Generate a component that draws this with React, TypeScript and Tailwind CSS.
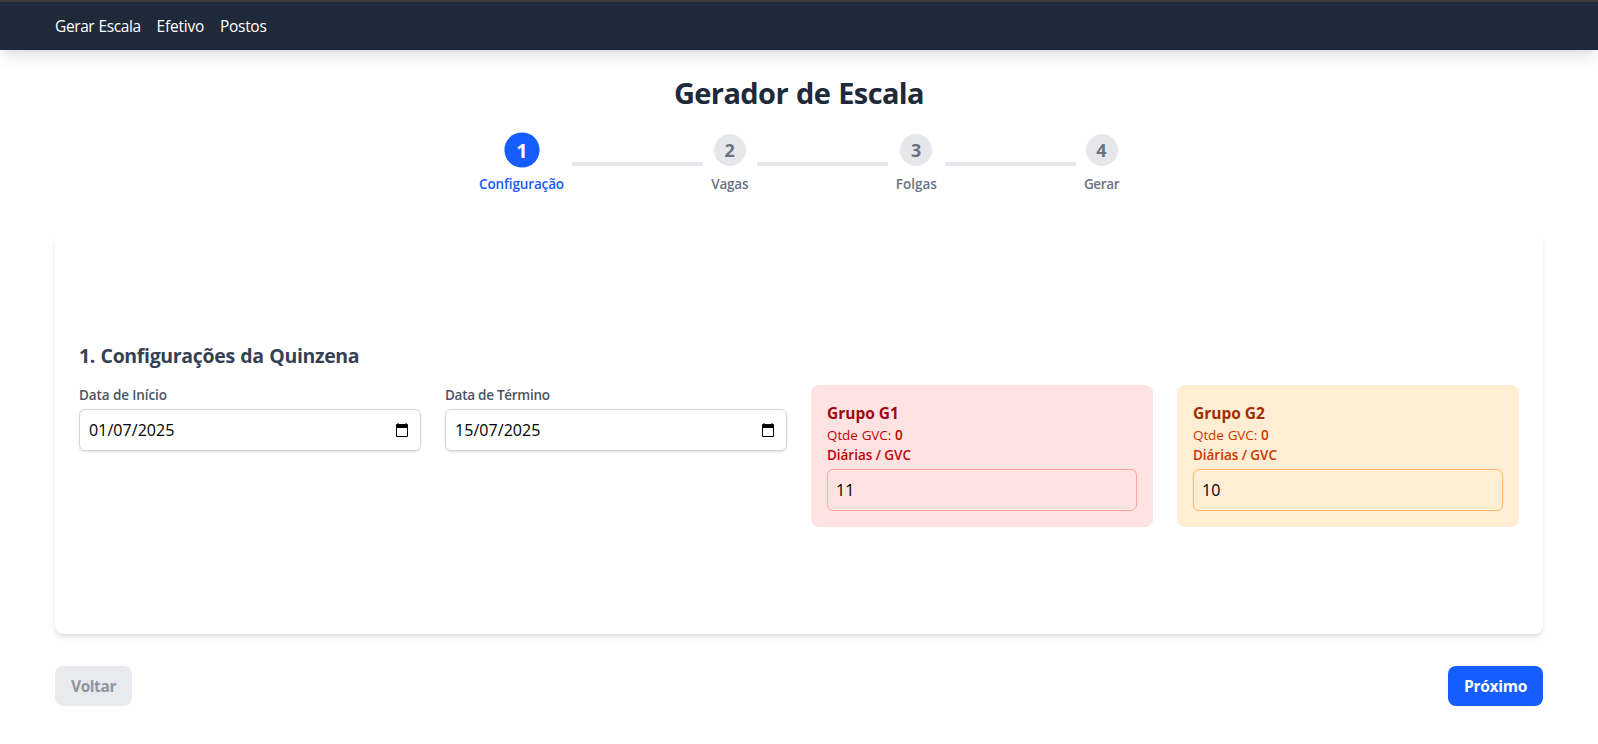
type Step = { n: number; label: string; width: string; tracking: string };

const steps: Step[] = [
  { n: 1, label: 'Configuração', width: 'w-[85px]', tracking: 'tracking-[-0.13px]' },
  { n: 2, label: 'Vagas', width: 'w-[37.5px]', tracking: 'tracking-[-0.2px]' },
  { n: 3, label: 'Folgas', width: 'w-[41.5px]', tracking: 'tracking-[0px]' },
  { n: 4, label: 'Gerar', width: 'w-[35px]', tracking: 'tracking-[-0.38px]' },
];

function Navbar() {
  return (
    <nav className="border-t-2 border-[#3b3b3d] bg-gray-800 text-white shadow-lg">
      <div className="mx-auto flex max-w-[1536px] gap-4 px-6 py-3 text-[15.5px]/6">
        <a className="w-[85.5px] whitespace-nowrap tracking-[-0.39px] [word-spacing:0.5px]">Gerar Escala</a>
        <a className="w-[47.5px] whitespace-nowrap tracking-[-0.2px]">Efetivo</a>
        <a className="w-[47px] whitespace-nowrap tracking-[-0.3px]">Postos</a>
      </div>
    </nav>
  );
}

function Stepper({ current }: { current: number }) {
  return (
    <div className="mx-auto mt-[22px] flex w-[640px] items-center justify-between">
      {steps.map((s, i) => {
        const active = s.n === current;
        return (
          <div key={s.n} className="contents">
            {i > 0 && <div className="mx-2 h-1 flex-1 bg-gray-200" />}
            <div className={`flex shrink-0 flex-col items-center ${s.width}`}>
              <div
                className={`flex h-8 w-8 items-center justify-center rounded-full text-lg font-bold ${
                  active ? 'scale-110 bg-[#155dfc] text-white' : 'bg-gray-200 text-gray-500'
                }`}
              >
                {s.n}
              </div>
              <span
                className={`mt-2 pt-px text-[13.5px]/[19px] font-semibold whitespace-nowrap ${s.tracking} ${
                  active ? 'text-[#155dfc]' : 'text-gray-500'
                }`}
              >
                {s.label}
              </span>
            </div>
          </div>
        );
      })}
    </div>
  );
}

function CalendarIcon() {
  return (
    <svg width="12" height="15" viewBox="0 0 12 15" fill="none">
      <path d="M1.5 0h1v2h-1zM9.5 0h1v2h-1z" fill="#000" />
      <path d="M0 2A1 1 0 0 1 1 1h10a1 1 0 0 1 1 1v11a1 1 0 0 1-1 1H1a1 1 0 0 1-1-1z" fill="#000" />
      <path d="M1 5h10v8H1z" fill="#fff" />
    </svg>
  );
}

function DateField({ label, value, tracking }: { label: string; value: string; tracking: string }) {
  return (
    <div>
      <label className={`block pt-px text-[13.5px]/[19px] font-semibold text-gray-600 ${tracking}`}>{label}</label>
      <div className="mt-1 flex items-center justify-between rounded-md border border-gray-300 p-2 pr-3 text-black shadow-sm">
        <span className="pl-px tracking-[0.05px]">{value}</span>
        <CalendarIcon />
      </div>
    </div>
  );
}

type Tone = { box: string; title: string; text: string; border: string };

const red: Tone = { box: 'bg-red-100', title: 'text-red-800', text: 'text-red-700', border: 'border-red-300' };
const orange: Tone = {
  box: 'bg-orange-100',
  title: 'text-orange-800',
  text: 'text-orange-700',
  border: 'border-orange-300',
};

function GroupCard({ title, value, tone }: { title: string; value: string; tone: Tone }) {
  return (
    <div className={`rounded-lg p-4 ${tone.box}`}>
      <h3 className={`pt-px text-[15.5px]/[23px] font-bold tracking-[-0.02px] ${tone.title}`}>{title}</h3>
      <p className={`pt-px text-[13.5px]/[19px] tracking-[-0.1px] [word-spacing:0.5px] ${tone.text}`}>
        Qtde GVC: <span className="font-semibold">0</span>
      </p>
      <label className={`block pt-px text-[13.5px]/[19px] font-semibold tracking-[-0.04px] ${tone.text}`}>
        Diárias / GVC
      </label>
      <div className={`mt-1 rounded-md border p-2 text-black ${tone.border}`}>{value}</div>
    </div>
  );
}

export default function App() {
  return (
    <div className="min-h-[744px] bg-white font-['Open_Sans',sans-serif] text-base">
      <Navbar />
      <main className="mx-auto max-w-[1536px] p-6">
        <h1 className="text-center text-[29px]/[38px] font-bold tracking-[-0.6px] text-gray-800 [word-spacing:1px]">
          Gerador de Escala
        </h1>
        <Stepper current={1} />
        <section className="mt-10 flex min-h-[400px] flex-col justify-center rounded-lg bg-white p-6 shadow-md">
          <h2 className="mb-[14px] text-[19.5px]/[30px] font-bold tracking-[-0.34px] text-gray-700 [word-spacing:0.8px]">
            1. Configurações da Quinzena
          </h2>
          <div className="grid grid-cols-4 gap-6">
            <DateField label="Data de Início" value="01/07/2025" tracking="tracking-[-0.1px]" />
            <DateField label="Data de Término" value="15/07/2025" tracking="tracking-[-0.27px]" />
            <GroupCard title="Grupo G1" value="11" tone={red} />
            <GroupCard title="Grupo G2" value="10" tone={orange} />
          </div>
        </section>
        <div className="mt-8 flex justify-between">
          <button
            disabled
            className="w-[77px] rounded-lg bg-[#e8eaed] py-2 text-[15.5px]/6 font-bold tracking-[-0.42px] text-[#8f959e]"
          >
            Voltar
          </button>
          <button className="w-[95px] rounded-lg bg-[#155dfc] py-2 text-[15.5px]/6 font-bold tracking-[-0.27px] text-white">
            Próximo
          </button>
        </div>
      </main>
    </div>
  );
}
